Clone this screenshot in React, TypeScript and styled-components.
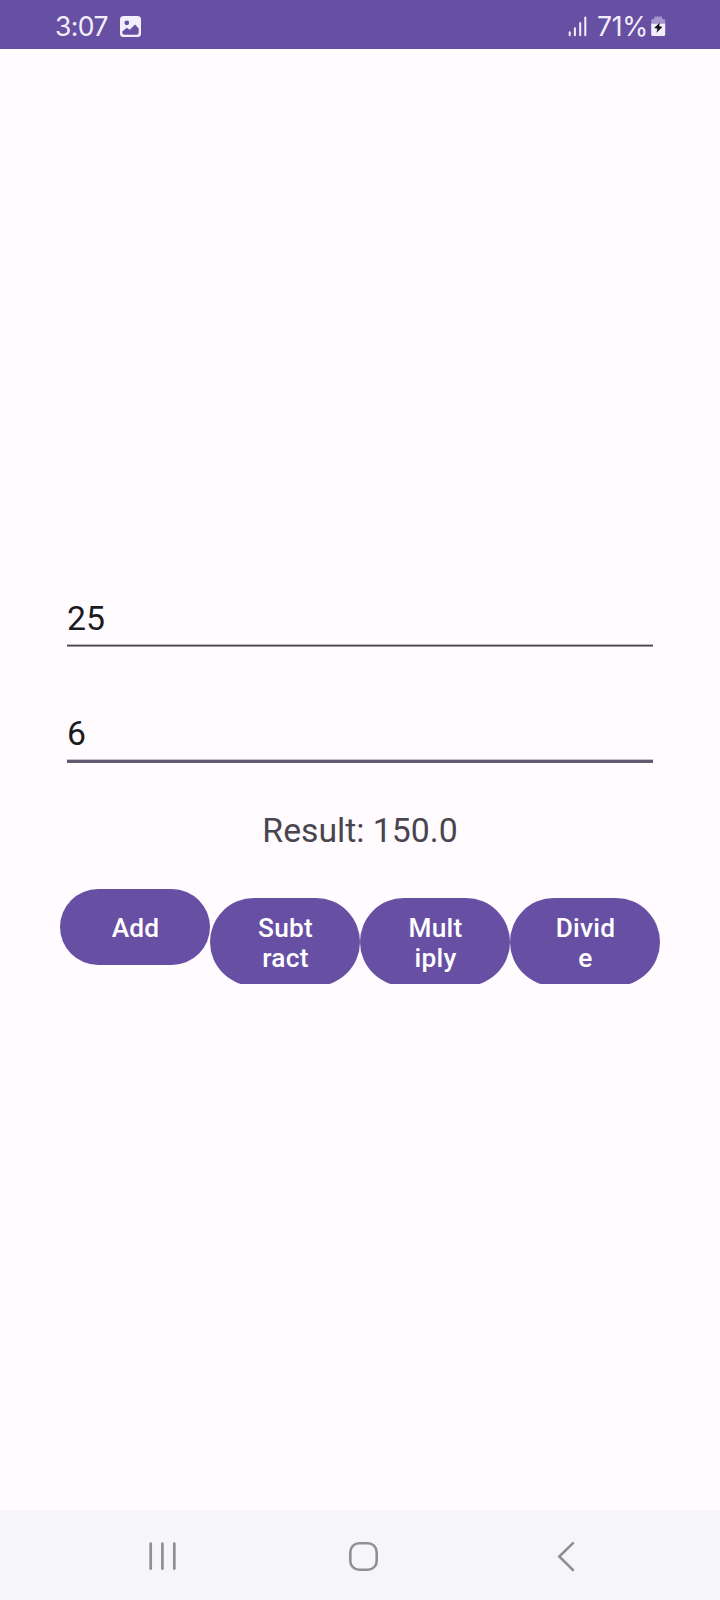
import React from 'react';
import styled, { createGlobalStyle } from 'styled-components';

const GlobalStyle = createGlobalStyle`
  * { box-sizing: border-box; }
  body { margin: 0; background: #fffbff; font-family: Roboto, sans-serif; }
`;

const Screen = styled.div`
  display: flex;
  flex-direction: column;
  width: 720px;
  height: 1600px;
  background: #fffbff;
`;

const StatusBar = styled.header`
  display: flex;
  align-items: flex-start;
  justify-content: space-between;
  height: 49px;
  padding: 16px 54px 0 55px;
  background: #6750a4;
  color: #f3effa;
`;

const StatusGroup = styled.div`
  display: flex;
  align-items: flex-start;
`;

const StatusText = styled.span<{ $width: number; $spacing: number }>`
  width: ${p => p.$width}px;
  margin-top: -6px;
  font: 400 26.5px/32px Inter, sans-serif;
  letter-spacing: ${p => p.$spacing}px;
  white-space: nowrap;
`;

const Main = styled.main`
  display: flex;
  flex-direction: column;
  flex: 1;
  padding: 540px 60px 0;
`;

const Field = styled.div`
  margin: 0 7px;
  padding-top: 10px;
  color: #1c1b1f;
  font-size: 33.75px;
  line-height: 40px;
`;

const Underline = styled.div<{ $focused?: boolean }>`
  height: ${p => (p.$focused ? 4 : 3)}px;
  margin: ${p => (p.$focused ? '5px 7px 48px' : '5px 7px 57px')};
  border-top: 1px solid ${p => (p.$focused ? '#c4c0c8' : '#bebbc0')};
  border-bottom: ${p => (p.$focused ? '0' : '1px solid #9c999e')};
  background: ${p => (p.$focused ? '#625b71' : '#4b474f')};
`;

const Result = styled.div`
  text-align: center;
  color: #49454f;
  font-size: 33.75px;
  line-height: 40px;
`;

const ButtonRow = styled.div`
  display: flex;
  align-items: flex-start;
  margin-top: 38px;
  height: 95px;
  overflow: hidden;
`;

const Button = styled.button<{ $tall?: boolean }>`
  display: flex;
  align-items: center;
  justify-content: center;
  width: 150px;
  height: ${p => (p.$tall ? 88 : 76)}px;
  margin-top: ${p => (p.$tall ? 9 : 0)}px;
  padding: 2px 0 0 1px;
  border: 0;
  border-radius: 44px;
  background: #6750a4;
  color: #fff;
  font: 500 26.25px/30px Roboto, sans-serif;
  letter-spacing: 0.25px;
  white-space: pre-line;
`;

const NavBar = styled.nav`
  display: flex;
  align-items: flex-start;
  justify-content: space-between;
  height: 90px;
  padding: 31px 144px 0 148px;
  background: #f6f6f8;
`;

const PictureIcon = () => (
  <svg width="21" height="21" viewBox="0 0 21 21">
    <rect width="21" height="21" rx="3.5" fill="#f3effa" />
    <circle cx="6.8" cy="6.8" r="2.4" fill="#6750a4" />
    <path d="M2.3 15.4 6.8 11.7 9.8 13.8 15 8.6 18.7 12.6v4.2a2 2 0 0 1-2 2H4.3a2 2 0 0 1-2-2z" fill="#6750a4" />
  </svg>
);

const SignalIcon = () => (
  <svg width="29" height="21" viewBox="0 0 29 21">
    <path d="M1.7 16.3v2.9M6.9 12.3v6.9M12.2 7v12.2M17.3 1.6v17.6" stroke="#f3effa" strokeWidth="2" strokeLinecap="round" />
  </svg>
);

const BatteryIcon = () => (
  <svg width="15" height="21" viewBox="0 0 15 21">
    <path d="M3.2 1.5a1 1 0 0 1 1-1h6a1 1 0 0 1 1 1V3h1.5A1.5 1.5 0 0 1 14.2 4.5V8H.2V4.5A1.5 1.5 0 0 1 1.7 3h1.5z" fill="#a496cb" />
    <path d="M.2 7.7h14v10.8a1.5 1.5 0 0 1-1.5 1.5h-11A1.5 1.5 0 0 1 .2 18.5z" fill="#f3effa" />
    <path d="M8.8 6.5 3.2 11.900l3.2.8-1 4 6-5.800-3.200-.8z" fill="#17141f" />
  </svg>
);

const RecentsIcon = () => (
  <svg width="30" height="32" viewBox="0 0 30 32">
    <path d="M2.7 2.7v25M14.4 2.7v25M26.3 2.7v25" stroke="#909092" strokeWidth="2.7" strokeLinecap="round" />
  </svg>
);

const HomeIcon = () => (
  <svg width="39" height="32" viewBox="0 0 39 32">
    <rect x="2.3" y="2.3" width="26.4" height="26.4" rx="8.8" fill="none" stroke="#909092" strokeWidth="2.6" />
  </svg>
);

const BackIcon = () => (
  <svg width="20" height="32" viewBox="0 0 20 32">
    <path d="M17 2.1 3.3 15.5 17 29" fill="none" stroke="#909092" strokeWidth="2.6" strokeLinecap="round" />
  </svg>
);

export default function App() {
  return (
    <Screen>
      <GlobalStyle />
      <StatusBar>
        <StatusGroup>
          <StatusText $width={65} $spacing={-0.6}>3:07</StatusText>
          <PictureIcon />
        </StatusGroup>
        <StatusGroup>
          <SignalIcon />
          <StatusText $width={54} $spacing={-0.3}>71%</StatusText>
          <BatteryIcon />
        </StatusGroup>
      </StatusBar>
      <Main>
        <Field>25</Field>
        <Underline />
        <Field>6</Field>
        <Underline $focused />
        <Result>Result: 150.0</Result>
        <ButtonRow>
          <Button>Add</Button>
          <Button $tall>{'Subt\nract'}</Button>
          <Button $tall>{'Mult\niply'}</Button>
          <Button $tall>{'Divid\ne'}</Button>
        </ButtonRow>
      </Main>
      <NavBar>
        <RecentsIcon />
        <HomeIcon />
        <BackIcon />
      </NavBar>
    </Screen>
  );
}
